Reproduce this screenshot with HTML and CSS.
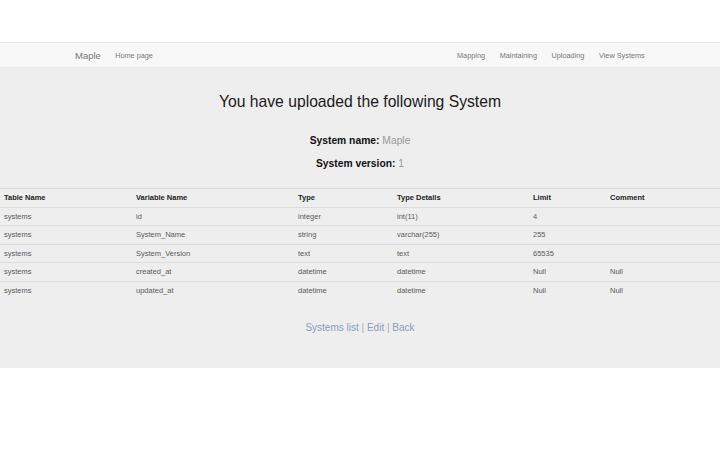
FILE: index.html
```html
<!DOCTYPE html>
<html>
<head>
<meta charset="utf-8">
<link rel="stylesheet" href="styles.css">
</head>
<body>
<div class="top"></div>
<nav class="navbar">
  <div class="nav-inner">
    <div class="nav-left">
      <a class="brand">Maple</a>
      <a class="nav-link">Home page</a>
    </div>
    <div class="nav-right">
      <a class="nav-link">Mapping</a>
      <a class="nav-link">Maintaining</a>
      <a class="nav-link">Uploading</a>
      <a class="nav-link">View Systems</a>
    </div>
  </div>
</nav>
<main class="content">
  <h1 class="title">You have uploaded the following System</h1>
  <p class="info"><strong>System name:</strong> <span class="val">Maple</span></p>
  <p class="info"><strong>System version:</strong> <span class="val">1</span></p>
  <table class="tbl">
    <thead>
      <tr><th class="c1">Table Name</th><th class="c2">Variable Name</th><th class="c3">Type</th><th class="c4">Type Details</th><th class="c5">Limit</th><th class="c6">Comment</th></tr>
    </thead>
    <tbody>
      <tr><td>systems</td><td>id</td><td>integer</td><td>int(11)</td><td>4</td><td></td></tr>
      <tr><td>systems</td><td>System_Name</td><td>string</td><td>varchar(255)</td><td>255</td><td></td></tr>
      <tr><td>systems</td><td>System_Version</td><td>text</td><td>text</td><td>65535</td><td></td></tr>
      <tr><td>systems</td><td>created_at</td><td>datetime</td><td>datetime</td><td>Null</td><td>Null</td></tr>
      <tr><td>systems</td><td>updated_at</td><td>datetime</td><td>datetime</td><td>Null</td><td>Null</td></tr>
    </tbody>
  </table>
  <p class="links"><a>Systems list</a> <span class="sep">|</span> <a>Edit</a> <span class="sep">|</span> <a>Back</a></p>
</main>
</body>
</html>
```
FILE: styles.css
```css
html, body {
  margin: 0;
  padding: 0;
  background: #ffffff;
  font-family: "Liberation Sans", Arial, sans-serif;
}
.top {
  height: 42px;
}
.navbar {
  height: 24px;
  background: #f8f8f8;
  border-top: 1px solid #e7e7e7;
  border-bottom: 1px solid #e7e7e7;
}
.nav-inner {
  height: 24px;
  margin: 0 68px 0 68px;
  display: flex;
  justify-content: space-between;
  align-items: center;
}
.nav-left, .nav-right {
  display: flex;
  align-items: center;
}
.brand {
  font-size: 9.5px;
  color: #777;
  padding: 0 7px 0 7px;
}
.nav-link {
  font-size: 7.3px;
  color: #777;
  padding: 0 7.3px;
}
.content {
  background: #eeeeee;
  padding: 1px 0 33px 0;
}
.title {
  margin: 23px 0 0 0;
  font-size: 15.7px;
  font-weight: normal;
  text-align: center;
  color: #1a1a1a;
  line-height: 20px;
}
.info {
  margin: 0;
  text-align: center;
  font-size: 10.3px;
  line-height: 14px;
  color: #111;
}
.title + .info {
  margin-top: 22px;
}
.info + .info {
  margin-top: 9px;
}
.info strong {
  font-weight: bold;
}
.val {
  color: #999;
}
.tbl {
  width: 100%;
  border-collapse: collapse;
  margin-top: 17px;
  font-size: 7.5px;
  color: #5a5a5a;
}
.tbl th, .tbl td {
  text-align: left;
  padding: 0 4px;
  height: 17.5px;
  border-top: 1px solid #dddddd;
  vertical-align: middle;
}
.tbl th {
  color: #222;
  font-weight: bold;
}
.c1 { width: 124px; }
.c2 { width: 154px; }
.c3 { width: 91px; }
.c4 { width: 128px; }
.c5 { width: 69px; }
.links {
  margin: 22px 0 0 0;
  text-align: center;
  font-size: 10px;
  color: #8c9bbd;
  line-height: 14px;
}
.sep {
  color: #aaa;
}
```
